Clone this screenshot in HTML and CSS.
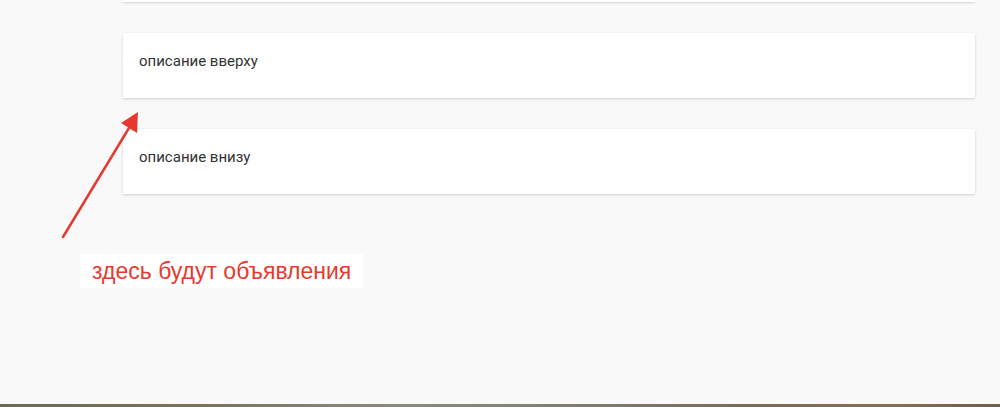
FILE: index.html
```html
<!DOCTYPE html>
<html lang="ru">
<head>
  <meta charset="UTF-8" />
  <meta name="viewport" content="width=device-width, initial-scale=1.0"/>
  <title>Объявления</title>
  <link rel="stylesheet" href="styles.css">
</head>
<body>
  <div class="page">
    <div class="content">
      <div class="card card-top"></div>
      <div class="card">описание вверху</div>
      <div class="card">описание внизу</div>
    </div>
    <svg class="arrow" width="100" height="140" viewBox="0 0 100 140">
      <line x1="3" y1="136" x2="72" y2="22" stroke="#e53a2f" stroke-width="2.5" stroke-linecap="round"/>
      <polygon points="78,11 61,22 77,32" fill="#e53a2f"/>
    </svg>
    <div class="note">здесь будут объявления</div>
    <div class="ground"></div>
  </div>
</body>
</html>
```

FILE: styles.css
```css
body {
  margin: 0;
  padding: 0;
  background: #f9f9f9;
  font-family: Roboto, "Noto Sans", sans-serif;
  color: #333;
}
.page {
  position: relative;
  min-height: 100vh;
  display: flex;
  flex-direction: column;
}
.content {
  margin-left: 123px;
  width: 852px;
  display: flex;
  flex-direction: column;
  gap: 31px;
}
.card {
  background: #fff;
  height: 65px;
  box-sizing: border-box;
  padding: 18px 16px 0;
  font-size: 15px;
  line-height: 20px;
  box-shadow: 0 1px 3px rgba(0,0,0,0.12), 0 1px 2px rgba(0,0,0,0.06);
}
.card-top {
  height: 2px;
  padding: 0;
}
.arrow {
  position: absolute;
  left: 60px;
  top: 101px;
}
.note {
  position: absolute;
  left: 80px;
  top: 254px;
  width: 283px;
  height: 34px;
  box-sizing: border-box;
  padding-left: 12px;
  background: #fff;
  color: #e53a2f;
  font-family: "Liberation Sans", Arial, sans-serif;
  font-size: 23px;
  line-height: 34px;
}
.ground {
  margin-top: auto;
  height: 3px;
  background: linear-gradient(90deg, #6d6a52, #7a7458 20%, #8b8a80 40%, #7f8074 55%, #7d6a55 75%, #8a6d52 90%, #6f5c49);
}
```
